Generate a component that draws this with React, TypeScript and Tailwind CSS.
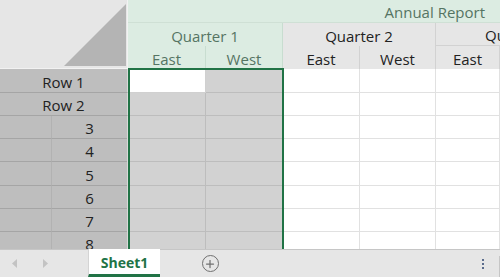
import { Plus } from 'lucide-react';

const font = { fontFamily: '"Open Sans", "Noto Sans", sans-serif' };

const dataCols = ['w-[78px]', 'w-[77px]', 'w-[77px]', 'w-[76px]', 'w-[64px]'];

const rows = [
  { label: 'Row 1', merged: true, h: 'h-[24px]' },
  { label: 'Row 2', merged: true, h: 'h-[23px]' },
  { label: '3', merged: false, h: 'h-[23px]' },
  { label: '4', merged: false, h: 'h-[23px]' },
  { label: '5', merged: false, h: 'h-[24px]' },
  { label: '6', merged: false, h: 'h-[23px]' },
  { label: '7', merged: false, h: 'h-[23px]' },
  { label: '8', merged: false, h: 'h-[23px]' },
];

function HeaderCell({ text, w, selected }: { text: string; w: string; selected?: boolean }) {
  return (
    <div
      className={`${w} shrink-0 h-[23px] pt-[3px] flex items-center justify-center border-r overflow-hidden whitespace-nowrap ${
        selected
          ? 'bg-[#dcece2] text-[#557463] border-[#c8ddd0]'
          : 'bg-[#e6e6e6] text-[#222] border-[#d2d2d2]'
      }`}
    >
      {text}
    </div>
  );
}

export default function App() {
  return (
    <div className="relative w-[500px] h-[277px] flex flex-col overflow-hidden bg-white text-[15px]" style={font}>
      {/* column headers */}
      <div className="flex h-[69px] shrink-0">
        <div className="w-[128px] shrink-0 relative bg-[#e6e6e6] border-r border-b border-[#f2f2f2]">
          <svg width="128" height="69" className="absolute left-0 top-0">
            <polygon points="64,66 126,66 126,4" fill="#b4b4b4" />
          </svg>
        </div>
        <div className="flex-1 min-w-0 overflow-hidden flex flex-col">
          <div className="h-[23px] pt-[3px] bg-[#dcece2] text-[#557463] border-b border-[#cfe0d5] flex items-center justify-end pr-[15px] whitespace-nowrap">
            Annual Report
          </div>
          <div className="flex h-[23px] border-b border-[#d2d2d2]">
            <HeaderCell text="Quarter 1" w="w-[155px]" selected />
            <HeaderCell text="Quarter 2" w="w-[153px]" />
            <div className="flex-1 min-w-0 pt-[3px] bg-[#e6e6e6] text-[#222] flex items-center pl-[49px] whitespace-nowrap overflow-hidden">
              Quarter 3
            </div>
          </div>
          <div className="flex h-[23px] border-b border-[#d2d2d2]">
            <HeaderCell text="East" w={dataCols[0]} selected />
            <HeaderCell text="West" w={dataCols[1]} selected />
            <HeaderCell text="East" w={dataCols[2]} />
            <HeaderCell text="West" w={dataCols[3]} />
            <HeaderCell text="East" w={dataCols[4]} />
          </div>
        </div>
      </div>

      {/* grid body */}
      <div className="flex-1 overflow-hidden">
        {rows.map((r, i) => (
          <div key={r.label} className={`flex ${r.h} shrink-0`}>
            {r.merged ? (
              <div className="w-[128px] shrink-0 pt-[3px] bg-[#bebebe] border-b border-r border-[#a5a5a5] border-r-[#d9d9d9] flex items-center justify-center text-[#222]">
                {r.label}
              </div>
            ) : (
              <div className="w-[128px] shrink-0 flex border-r border-[#d9d9d9]">
                <div className="w-[52px] bg-[#bebebe] border-b border-r border-[#a5a5a5] border-r-[#b2b2b2]" />
                <div className="flex-1 pt-[3px] bg-[#bebebe] border-b border-[#a5a5a5] flex items-center justify-center text-[#222]">
                  {r.label}
                </div>
              </div>
            )}
            {dataCols.map((w, j) => {
              const sel = j < 2;
              const active = sel && i === 0 && j === 0;
              return (
                <div
                  key={j}
                  className={`${w} shrink-0 border-r border-b ${
                    active
                      ? 'bg-white border-[#d0d0d0]'
                      : sel
                      ? 'bg-[#d2d2d2] border-[#bdbdbd]'
                      : 'bg-white border-[#e1e1e1]'
                  }`}
                />
              );
            })}
          </div>
        ))}
      </div>

      {/* selection outline */}
      <div className="absolute left-[128px] top-[68px] w-[156px] h-[200px] border-2 border-[#217346] pointer-events-none" />

      {/* sheet tabs */}
      <div className="relative z-10 h-[28px] shrink-0 flex items-stretch bg-[#e6e6e6] border-t border-[#c6c6c6]">
        <div className="w-[88px] flex items-center gap-[24px] pl-[12px] text-[#c3c3c3]">
          <svg width="6" height="9" viewBox="0 0 6 9">
            <polygon points="5,0 5,9 0,4.5" fill="currentColor" />
          </svg>
          <svg width="6" height="9" viewBox="0 0 6 9">
            <polygon points="1,0 1,9 6,4.5" fill="currentColor" />
          </svg>
        </div>
        <div className="-mt-px w-[72px] pt-[2px] bg-white border-l border-[#d4d4d4] border-b-[3px] border-b-[#217346] flex items-center justify-center font-bold text-[#217346] text-[14px]">
          Sheet1
        </div>
        <div className="w-[100px] flex items-center justify-center">
          <div className="w-[17px] h-[17px] rounded-full border-[1.5px] border-[#707070] flex items-center justify-center text-[#707070]">
            <Plus size={12} strokeWidth={2.5} />
          </div>
        </div>
        <div className="flex-1 flex items-center justify-end pr-[15px]">
          <div className="flex flex-col gap-[2px]">
            <div className="w-[2px] h-[2px] bg-[#5a6c8c]" />
            <div className="w-[2px] h-[2px] bg-[#5a6c8c]" />
            <div className="w-[2px] h-[2px] bg-[#5a6c8c]" />
          </div>
        </div>
        <div className="w-px bg-[#c6c6c6] mt-[6px]" />
      </div>
    </div>
  );
}
